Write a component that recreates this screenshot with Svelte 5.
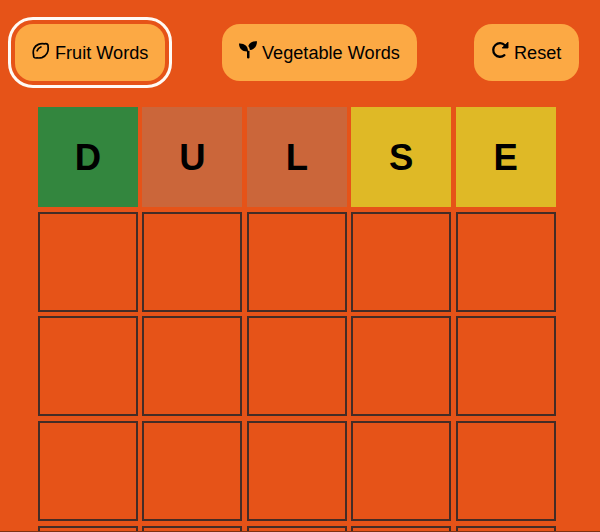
<script>
  const rows = [
    [
      { letter: 'D', state: 'correct' },
      { letter: 'U', state: 'absent' },
      { letter: 'L', state: 'absent' },
      { letter: 'S', state: 'present' },
      { letter: 'E', state: 'present' }
    ],
    ...Array.from({ length: 4 }, () =>
      Array.from({ length: 5 }, () => ({ letter: '', state: 'empty' }))
    )
  ];
</script>

<div class="game">
  <header>
    <button class="fruit selected">
      <svg viewBox="0 0 18 18" fill="none" stroke="#000" stroke-width="1.7" stroke-linecap="round" stroke-linejoin="round">
        <path d="M6.4 2.4C8.4 1.5 10.6 1.5 12.4 1.8C13.6 1.6 15 1.6 15.8 2.6C16.3 3.4 15.9 4.3 16.1 5.2C16.4 7.3 16.1 9.4 15 11.4C13.7 13.7 12 14.9 9.9 15.6C8.2 16.1 6.6 16.1 5 15.9C3.9 16.1 2.8 16.1 2 15.2C1.4 14.4 1.7 13.4 1.5 12.5C1.1 10.6 1.1 8.5 2 6.5C3 4.5 4.6 3.2 6.4 2.4Z" />
        <path d="M5.1 8.8C5.7 7 7 5.7 8.9 5" />
      </svg>
      <span>Fruit Words</span>
    </button>
    <button class="vegetable">
      <svg viewBox="0 0 18 18" fill="#000">
        <path d="M0 2.6C5.3 2.2 9 5.2 9 9.8H10.5V16.6Q10.5 17.6 9.2 17.6Q8 17.6 8 16.6V10.6C3.1 10.6 0 7.4 0 2.6Z" />
        <path d="M18 .3C13.5 .1 10.3 1.8 9.3 5.1C10.1 6.3 10.7 7.5 10.9 9C15.3 8.8 18 5.3 18 .3Z" />
      </svg>
      <span>Vegetable Words</span>
    </button>
    <button class="reset">
      <svg viewBox="0 0 18 18">
        <path d="M13.9 4.2A6.8 6.8 0 1 0 13.4 14.2" fill="none" stroke="#000" stroke-width="2.3" stroke-linecap="round" />
        <path d="M17 1.2V7H11.2Z" fill="#000" stroke="#000" stroke-width=".9" stroke-linejoin="round" />
      </svg>
      <span>Reset</span>
    </button>
  </header>

  <main>
    {#each rows as row}
      {#each row as cell}
        <div class="cell {cell.state}">{cell.letter}</div>
      {/each}
    {/each}
  </main>
</div>

<style>
  :global(body) {
    margin: 0;
    background: #e65318;
  }
  .game {
    box-sizing: border-box;
    height: 532px;
    overflow: hidden;
    border-bottom: 1px solid #7d3214;
    background: #e65318;
    font-family: 'Liberation Sans', Arial, sans-serif;
  }
  header {
    display: flex;
    justify-content: space-between;
    padding: 24px 21px 0 15px;
  }
  button {
    display: flex;
    align-items: center;
    box-sizing: border-box;
    height: 57px;
    padding: 0 17px;
    gap: 5px;
    border: 0;
    border-radius: 18px;
    background: #fca944;
    color: #000;
    font: 18.15px 'Liberation Sans', Arial, sans-serif;
    white-space: nowrap;
  }
  button span {
    padding-top: 2px;
  }
  .fruit {
    width: 150px;
  }
  .vegetable {
    width: 195px;
  }
  .reset {
    width: 105px;
  }
  .selected {
    outline: 3px solid #fffaf5;
    outline-offset: 4px;
  }
  svg {
    flex: none;
    width: 18px;
    height: 18px;
    margin-bottom: 5px;
  }
  .fruit svg {
    margin-bottom: 4px;
  }
  main {
    display: grid;
    grid-template-columns: repeat(5, 100px);
    grid-auto-rows: 100px;
    gap: 4.55px 4.4px;
    padding: 26.4px 0 0 38px;
  }
  .cell {
    display: flex;
    align-items: center;
    justify-content: center;
    box-sizing: border-box;
    border: 2px solid #442c26;
    padding-top: 1px;
    color: #000;
    font-size: 36.5px;
    font-weight: 700;
    line-height: 1;
  }
  .correct {
    border-color: #33863e;
    background: #33863e;
  }
  .absent {
    border-color: #cb663a;
    background: #cb663a;
  }
  .present {
    border-color: #dfb926;
    background: #dfb926;
  }
</style>
